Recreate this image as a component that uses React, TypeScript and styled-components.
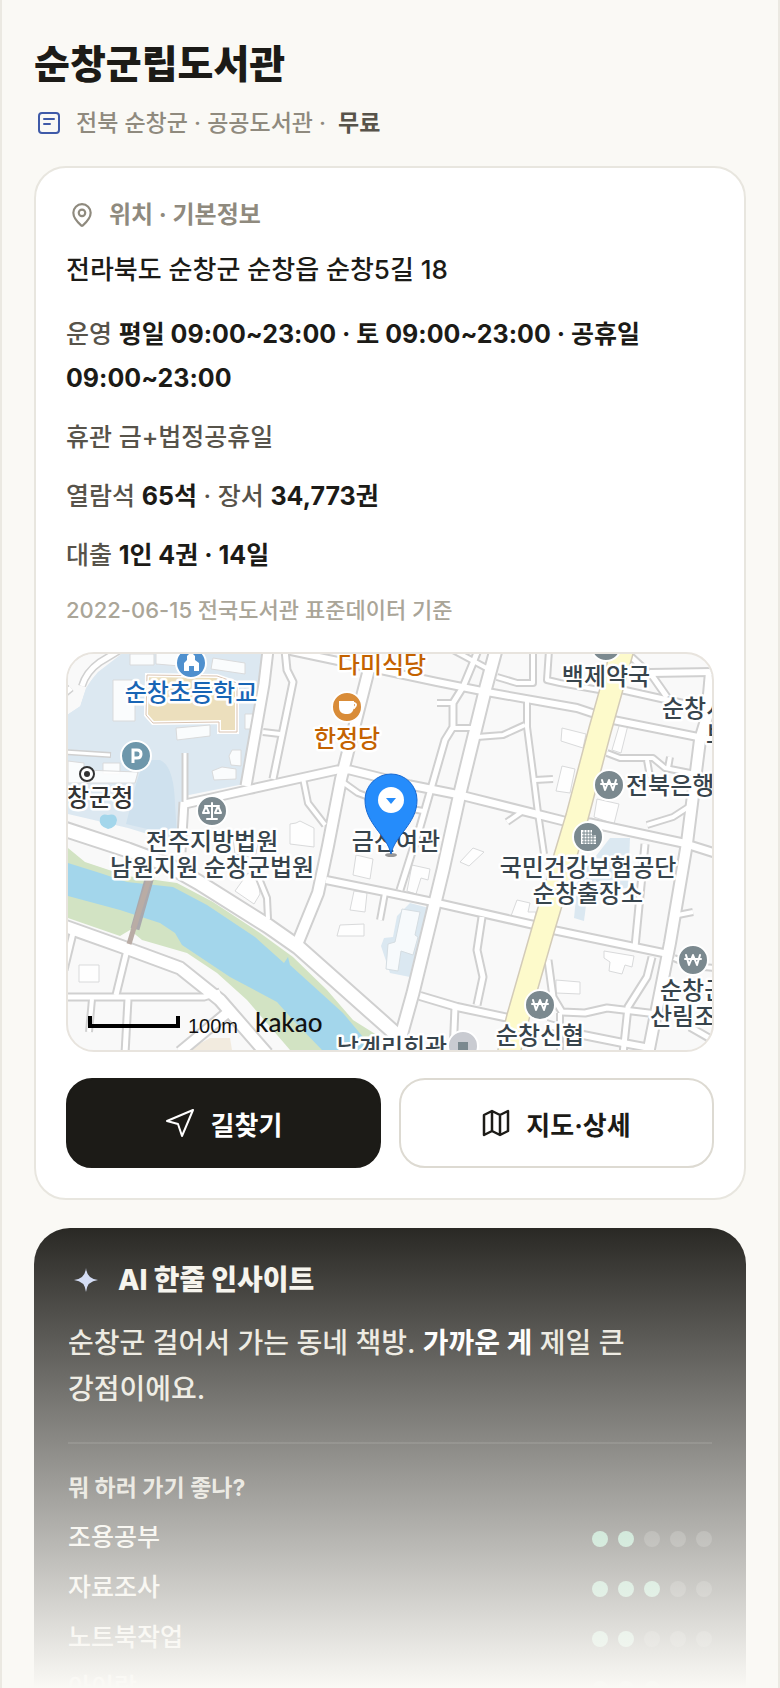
import { FC } from 'react';
import styled, { createGlobalStyle } from 'styled-components';
import { MapPin } from 'lucide-react';

const GlobalStyle = createGlobalStyle`
  * {
    box-sizing: border-box;
  }
  body {
    margin: 0;
    background: #faf9f5;
    color: #1c1b17;
    font-family: Inter, 'Noto Sans CJK KR', sans-serif;
    font-size: 25px;
    font-weight: 500;
    word-break: keep-all;
  }
`;

const Shell = styled.main`
  position: relative;
  height: 100vh;
  overflow: hidden;
  padding: 34px 32px 0;
  border: solid #ebe9e2;
  border-width: 0 2px;
  display: flex;
  flex-direction: column;
`;

const Title = styled.h1`
  margin: 0;
  font-size: 39px;
  line-height: 60px;
  font-weight: 800;
`;

const Meta = styled.p`
  display: flex;
  align-items: center;
  gap: 12px;
  margin: 10px 0 24px;
  font-size: 23px;
  line-height: 38px;
  color: #8f8a7e;

  svg {
    margin: 0 2px;
  }
  strong {
    color: #57534a;
    font-weight: 700;
  }
`;

const Card = styled.section`
  flex: none;
  padding: 30px;
  border: 2px solid #e8e6df;
  border-radius: 32px;
  background: #fff;
`;

const CardTitle = styled.h2`
  display: flex;
  align-items: center;
  gap: 14px;
  margin: 0;
  font-size: 24px;
  line-height: 34px;
  font-weight: 700;
  color: #8f8a7e;

  svg {
    margin-left: 3px;
  }
`;

const Address = styled.p`
  margin: 18px 0 22px;
  font-size: 26px;
  line-height: 40px;
`;

const Info = styled.p`
  margin: 0 0 15px;
  font-size: 25px;
  line-height: 44px;
  color: #57534a;

  strong {
    color: #1c1b17;
    font-weight: 700;
  }
`;

const Source = styled.p`
  margin: 0 0 24px;
  font-size: 22px;
  line-height: 36px;
  color: #aaa598;
`;

const MapBox = styled.div`
  height: 400px;
  overflow: hidden;
  border: 2px solid #e8e4de;
  border-radius: 28px;
  background: #f9f9f9;

  svg {
    display: block;
    width: 100%;
    height: 100%;
  }
`;

const Label = styled.text<{ $color?: string }>`
  font-family: 'Noto Sans CJK KR', sans-serif;
  font-size: 24px;
  font-weight: 500;
  fill: ${({ $color }) => $color || '#37444c'};
  stroke: #fff;
  stroke-width: 5px;
  stroke-linejoin: round;
  paint-order: stroke;
`;

const MapMark = styled.text<{ $family: string; $size: number }>`
  font-family: ${({ $family }) => $family}, sans-serif;
  font-size: ${({ $size }) => $size}px;
  fill: #111;
`;

const Actions = styled.div`
  display: grid;
  grid-template-columns: 1fr 1fr;
  gap: 18px;
  margin-top: 26px;
`;

const Button = styled.button<{ $primary?: boolean }>`
  display: flex;
  align-items: center;
  justify-content: center;
  gap: 16px;
  height: 90px;
  border: 2px solid ${({ $primary }) => ($primary ? '#1c1b17' : '#dddad2')};
  border-radius: 26px;
  background: ${({ $primary }) => ($primary ? '#1c1b17' : '#fff')};
  color: ${({ $primary }) => ($primary ? '#fff' : '#1c1b17')};
  font-family: inherit;
  font-size: 26px;
  font-weight: 700;
  cursor: pointer;
`;

const Insight = styled.section`
  flex: none;
  margin-top: 28px;
  padding: 32px 34px;
  border-radius: 36px;
  background: #1c1b17;
  color: #f5f3ec;
`;

const InsightTitle = styled.h2`
  display: flex;
  align-items: center;
  gap: 20px;
  margin: 0;
  font-size: 28px;
  line-height: 40px;
  font-weight: 800;

  svg {
    margin-left: 6px;
  }
`;

const InsightText = styled.p`
  margin: 20px 0 30px;
  font-size: 28px;
  line-height: 46px;
  color: #e8e5dc;

  strong {
    color: #fff;
    font-weight: 700;
  }
`;

const Question = styled.h3`
  margin: 0;
  padding: 26px 0 8px;
  border-top: 2px solid rgba(255, 255, 255, 0.1);
  font-size: 23px;
  line-height: 36px;
  font-weight: 700;
  color: #d8d5cb;
`;

const ScoreList = styled.ul`
  margin: 0;
  padding: 0;
  list-style: none;
`;

const ScoreRow = styled.li`
  display: flex;
  align-items: center;
  justify-content: space-between;
  height: 50px;
`;

const ScoreName = styled.span`
  padding-bottom: 4px;
  line-height: 36px;
`;

const Dots = styled.div`
  display: flex;
  gap: 10px;
`;

const Dot = styled.i<{ $on: boolean }>`
  width: 16px;
  height: 16px;
  border-radius: 50%;
  background: ${({ $on }) => ($on ? '#7fc9a6' : 'rgba(255, 255, 255, 0.18)')};
`;

const Fade = styled.div`
  position: absolute;
  inset: auto 0 0;
  height: 490px;
  background: linear-gradient(rgba(250, 249, 245, 0), #faf9f5);
  pointer-events: none;
`;

const scores = [
  { name: '조용공부', score: 2 },
  { name: '자료조사', score: 3 },
  { name: '노트북작업', score: 2 },
  { name: '아이랑', score: 3 },
];

// [path, width of the road surface]
const roads: [string, number][] = [
  ['M-4 175L60 196L100 211L130 228L200 272L230 293L320 373L350 400', 13],
  ['M-4 272L55 293L112 314L152 346L199 400', 11],
  ['M-4 343H136L152 338', 5],
  ['M59 296L48 341', 5],
  ['M60 345L57 400', 5],
  ['M24 345L21 378', 4],
  ['M5 279L-4 316', 5],
  ['M159 359L112 398', 9],
  ['M230 288L250 239L260 192L273 125L300 19L304 -5', 10],
  ['M258 226L322 239L365 248L475 273L485 276L600 300', 6],
  ['M190 222L199 244L200 265', 4],
  ['M317 239L312 266', 4],
  ['M200 -4L196 30L178 132', 9],
  ['M217 -4L219 16L225 28L205 125', 5],
  ['M195 78L212 80', 4],
  ['M117 150L179 136L269 116L282 116L342 131L392 141L500 168L522 169L615 189L650 200', 7],
  ['M117 99V148', 3],
  ['M116 148L113 198', 7],
  ['M235 124L240 149L257 171', 4],
  ['M276 129L290 139L322 151L355 157', 4],
  ['M428 -4L418 33L392 139L375 216L345 339L328 400', 11],
  ['M410 -4L405 9L395 33L385 49L385 73L377 86L352 173L332 236', 5],
  ['M369 49H385', 4],
  ['M385 74H407', 4],
  ['M385 -4L424 17', 4],
  ['M218 -4L322 18L369 28L419 38L509 54L545 66L640 85', 6],
  ['M429 23L449 29H465V-4', 4],
  ['M481 -4L479 26L492 29L537 37', 4],
  ['M459 46V73L465 119L470 159L476 200', 4],
  ['M409 83L435 81L457 71', 4],
  ['M467 126L485 125', 4],
  ['M439 168L455 157', 4],
  ['M560 0L585 23L599 43', 5],
  ['M582 19L648 18', 6],
  ['M555 36L640 55', 5],
  ['M643 18L639 63L632 86L619 189L602 289L580 400', 10],
  ['M539 99L552 104H585L597 114L627 120', 4],
  ['M602 103L600 114', 4],
  ['M579 106L582 123', 4],
  ['M579 171L605 163L625 150', 4],
  ['M414 263L409 296L415 323L409 351', 5],
  ['M352 342L389 353L450 366', 6],
  ['M387 353L385 400', 5],
  ['M480 306L485 343L494 358L517 359L539 354L589 360', 5],
  ['M584 303L579 323L560 353L555 400', 5],
  ['M577 190L567 293', 5],
  ['M610 261L625 258', 4],
  ['M478 370L515 381L555 389L582 394', 6],
  ['M492 359V400', 4],
  ['M622 373L648 388', 5],
  ['M606 304L624 312L648 314', 4],
];

const yellowRoad = 'M555 -6L532 76L509 163L475 276L450 363L440 402';

const buildings = [
  'M62 0H86V11H62Z',
  'M88 -4H112V12L88 10Z',
  'M145 4L177 9V20L143 15Z',
  'M45 26H67V67H45Z',
  'M108 74L142 71V82L109 86Z',
  'M177 60H186V75H177Z',
  'M161 102L164 96H173V112L163 111Z',
  'M144 117L154 113L168 115V125L146 126Z',
  'M35 109H52V120H35Z',
  'M0 107L16 109V116L70 118L67 129H0Z',
  'M494 74L518 80L515 94L493 87Z',
  'M494 112L507 115L502 139L488 137Z',
  'M552 69L560 71L553 99L544 96Z',
  'M529 145L551 150L546 170L526 163Z',
  'M392 208L405 194L416 198L401 212Z',
  'M344 211L362 215L360 226L353 224L348 240L339 237Z',
  'M288 201L305 205L302 225L285 221Z',
  'M286 237L299 239L297 258L282 256Z',
  'M272 271L296 270V282H269Z',
  'M222 170L228 169L232 167L246 174V193L222 190Z',
  'M165 184L190 190L187 204L167 200Z',
  'M180 219L190 226L192 240L186 250L167 237Z',
  'M449 246L462 249L460 258L468 258L466 268L443 262Z',
  'M536 297L566 302L564 313L557 311L554 320L541 317L542 308L536 304Z',
  'M488 326L512 328V340L488 339Z',
  'M11 311H31V328H11Z',
];

const RoundIcon: FC<{ x: number; y: number; color?: string; glyph: string }> = ({
  x,
  y,
  color = '#7b898f',
  glyph,
}) => (
  <g transform={`translate(${x} ${y})`}>
    <circle r='15' fill={color} stroke='#fff' strokeWidth='2' />
    <path
      d={glyph}
      fill='none'
      stroke='#fff'
      strokeWidth='2'
      strokeLinecap='round'
      strokeLinejoin='round'
    />
  </g>
);

const won = 'M-7 -5L-4 5L0 -5L4 5L7 -5M-8 -1H8';
const scale = 'M0 -8V7M-5 8H5M-7 -5H7M-6 -5L-9 2H-3ZM6 -5L3 2H9Z';

const LocationMap: FC = () => (
  <MapBox>
    <svg
      viewBox='0 0 644 396'
      preserveAspectRatio='xMidYMid slice'
      role='img'
      aria-label='지도'
    >
      <path
        d='M0 60L12 52L18 32L30 18L56 -2H197L176 130L116 142L112 190L60 174L0 160Z'
        fill='#dce8f1'
      />
      <path d='M0 -4H56L30 16L18 34L12 52L0 60Z' fill='#f9f9f9' />
      <path
        d='M52 -4L32 8Q18 18 14 32M3 34L-4 40'
        fill='none'
        stroke='#d0d0d0'
        strokeWidth='8'
      />
      <path
        d='M52 -4L32 8Q18 18 14 32M3 34L-4 40'
        fill='none'
        stroke='#fff'
        strokeWidth='5'
      />
      <path d='M-4 98L43 101' stroke='#d0d0d0' strokeWidth='6' />
      <path d='M-4 98L42 101' stroke='#fff' strokeWidth='3' />
      <path d='M68 130L76 106L92 106Q106 112 107 150L109 182L58 170Z' fill='#cfe1ee' />
      <path d='M32 164Q34 159 40 161Q48 159 49 166Q48 174 40 175Q30 172 32 164Z' fill='#a3d6eb' />
      <path
        d='M79 21L149 22L169 29V78H151V68L85 69L78 61Z'
        fill='#ecdfbd'
        stroke='#fff'
        strokeWidth='4'
      />
      <path
        d='M79 21L149 22L169 29V78H151V68L85 69L78 61Z'
        fill='none'
        stroke='#d9c3b2'
      />
      <path
        d='M342 249L361 254L342 323L322 319L313 292L316 284L325 283L329 262Z'
        fill='#dbe8f1'
      />
      <path d='M542 184H562L560 234L520 236L516 267L506 264L510 225Z' fill='#dbe8f1' />
      <path d='M120 396L142 384H162L164 396Z' fill='#f2ebdf' />

      {buildings.map((d) => (
        <path key={d} d={d} fill='#fff' fillOpacity='0.85' stroke='#d9dadb' />
      ))}
      <path
        d='M334 255L352 258L347 281L350 283L345 301L333 297L330 317L318 315L320 290L327 288Z'
        fill='#f7fafc'
        stroke='#d5dde2'
      />

      {roads.map(([d, width]) => (
        <path
          key={d}
          d={d}
          fill='none'
          stroke='#d0d0d0'
          strokeWidth={width + 4}
          strokeLinejoin='round'
        />
      ))}
      {roads.map(([d, width]) => (
        <path
          key={d}
          d={d}
          fill='none'
          stroke='#fff'
          strokeWidth={width}
          strokeLinejoin='round'
        />
      ))}

      <path
        d='M0 194L17 208L59 222L109 229L145 248L192 279L225 303L259 336L285 366L312 383L322 396H222L179 346L149 319L119 299L74 286L62 276L52 282L0 264Z'
        fill='#d2e3c3'
      />
      <path
        d='M0 209L32 219L59 228L105 233L139 251L187 283L197 292L216 309L220 303L222 311L275 359L295 383L304 396H254L225 366L209 348L162 323L114 291L107 279L92 269L52 256L0 242Z'
        fill='#a3d6eb'
      />
      <path d={yellowRoad} fill='none' stroke='#d3cbb8' strokeWidth='24' />
      <path d={yellowRoad} fill='none' stroke='#fdfacb' strokeWidth='21' />
      <path d='M82 222L67 275' stroke='#aaa8ac' strokeWidth='9' />
      <path d='M82 222L61 290' stroke='#b9aca5' strokeWidth='5' />

      <g textAnchor='middle'>
        <Label x='123' y='47' $color='#1865b5'>순창초등학교</Label>
        <Label x='314' y='19' $color='#c46200'>다미식당</Label>
        <Label x='279' y='93' $color='#c46200'>한정당</Label>
        <Label x='144' y='196'>전주지방법원</Label>
        <Label x='144' y='222'>남원지원 순창군법원</Label>
        <Label x='328' y='196'>금산여관</Label>
        <Label x='538' y='31'>백제약국</Label>
        <Label x='520' y='222'>국민건강보험공단</Label>
        <Label x='520' y='248'>순창출장소</Label>
        <Label x='472' y='390'>순창신협</Label>
        <Label x='324' y='402'>남계리회관</Label>
      </g>
      <Label x='-1' y='152' $color='#333'>창군청</Label>
      <Label x='594' y='63'>순창시</Label>
      <Label x='638' y='89'>보</Label>
      <Label x='558' y='140'>전북은행</Label>
      <Label x='592' y='345'>순창군</Label>
      <Label x='582' y='371'>산림조합</Label>

      <RoundIcon x={123} y={9} color='#4f90ce' glyph='' />
      <path
        d='M116 17V9L119 6V2L123 -2L127 2V6L131 9V17H126V12H121V17Z'
        fill='#fff'
      />
      <RoundIcon x={279} y={53} color='#d98c38' glyph='M7 -4Q11 -3 7 1' />
      <path d='M271 47H286V53Q285 60 280 60H277Q271 59 271 53Z' fill='#fff' />
      <RoundIcon x={68} y={102} color='#6e97ab' glyph='' />
      <path d='M65 109V96H69Q73 96 73 100Q73 104 69 104H65' fill='none' stroke='#fff' strokeWidth='3' />
      <RoundIcon x={144} y={157} glyph={scale} />
      <RoundIcon x={541} y={131} glyph={won} />
      <RoundIcon x={538} y={-8} glyph='' />
      <RoundIcon x={520} y={183} glyph='' />
      <path d='M513 176H524V181H528V190H513Z' fill='#fff' />
      <path
        d='M514 179H524M514 182H528M514 185H528M514 188H528M516 176V190M519 176V190M522 176V190M525 181V190'
        stroke='#7b898f'
      />
      <RoundIcon x={625} y={306} glyph={won} />
      <RoundIcon x={472} y={351} glyph={won} />
      <RoundIcon x={395} y={392} color='#c9cbd1' glyph='' />
      <path d='M390 388H400V398H390Z' fill='#7b898f' />
      <circle cx='19' cy='120' r='7' fill='#fff' stroke='#333' strokeWidth='2' />
      <circle cx='19' cy='120' r='3' fill='#333' />

      <ellipse cx='323' cy='201' rx='6' ry='2' fill='#555' opacity='0.6' />
      <path
        d='M323 200C319 181 297 170 297 146A26 26 0 0 1 349 146C349 170 327 181 323 200Z'
        fill='#258cfb'
        stroke='#1769d2'
      />
      <circle cx='323' cy='146' r='13' fill='#fff' />
      <path d='M318 144H328L323 150Z' fill='#258cfb' />

      <path d='M22 362V372H110V362' fill='none' stroke='#000' strokeWidth='4' />
      <MapMark x='120' y='379' $family="'Liberation Sans'" $size={20}>100m</MapMark>
      <MapMark x='187' y='378' $family='Lato' $size={26}>kakao</MapMark>
    </svg>
  </MapBox>
);

const App: FC = () => {
  return (
    <>
      <GlobalStyle />
      <Shell>
        <Title>순창군립도서관</Title>
        <Meta>
          <svg width='26' height='26' viewBox='0 0 26 26' fill='none' stroke='#3f5aa8' strokeWidth='2' strokeLinecap='round'>
            <rect x='3' y='3' width='20' height='20' rx='3' />
            <path d='M8 9H18M8 14H14' />
          </svg>
          <span>전북 순창군 · 공공도서관 ·</span>
          <strong>무료</strong>
        </Meta>

        <Card>
          <CardTitle>
            <MapPin size={26} strokeWidth={2} />
            위치 · 기본정보
          </CardTitle>
          <Address>전라북도 순창군 순창읍 순창5길 18</Address>
          <Info>
            운영 <strong>평일 09:00~23:00 · 토 09:00~23:00 · 공휴일 09:00~23:00</strong>
          </Info>
          <Info>휴관 금+법정공휴일</Info>
          <Info>
            열람석 <strong>65석</strong> · 장서 <strong>34,773권</strong>
          </Info>
          <Info>
            대출 <strong>1인 4권 · 14일</strong>
          </Info>
          <Source>2022-06-15 전국도서관 표준데이터 기준</Source>
          <LocationMap />
          <Actions>
            <Button type='button' $primary>
              <svg width='30' height='30' viewBox='0 0 30 30' fill='none' stroke='currentColor' strokeWidth='2' strokeLinejoin='round'>
                <path d='M28 2L2 13L13 16L17 28Z' />
              </svg>
              길찾기
            </Button>
            <Button type='button'>
              <svg width='28' height='28' viewBox='0 0 28 28' fill='none' stroke='currentColor' strokeWidth='2.5' strokeLinejoin='round'>
                <path d='M2 6L10 2L18 6L26 2V22L18 26L10 22L2 26ZM10 2V22M18 6V26' />
              </svg>
              지도·상세
            </Button>
          </Actions>
        </Card>

        <Insight>
          <InsightTitle>
            <svg width='24' height='24' viewBox='0 0 24 24' fill='#cdd8f5'>
              <path d='M12 0Q13 11 24 12Q13 13 12 24Q11 13 0 12Q11 11 12 0Z' />
            </svg>
            AI 한줄 인사이트
          </InsightTitle>
          <InsightText>
            순창군 걸어서 가는 동네 책방. <strong>가까운 게</strong> 제일 큰 강점이에요.
          </InsightText>
          <Question>뭐 하러 가기 좋나?</Question>
          <ScoreList>
            {scores.map(({ name, score }) => (
              <ScoreRow key={name}>
                <ScoreName>{name}</ScoreName>
                <Dots role='img' aria-label={`5점 중 ${score}점`}>
                  {[1, 2, 3, 4, 5].map((n) => (
                    <Dot key={n} $on={n <= score} />
                  ))}
                </Dots>
              </ScoreRow>
            ))}
          </ScoreList>
        </Insight>
        <Fade />
      </Shell>
    </>
  );
};

export default App;
